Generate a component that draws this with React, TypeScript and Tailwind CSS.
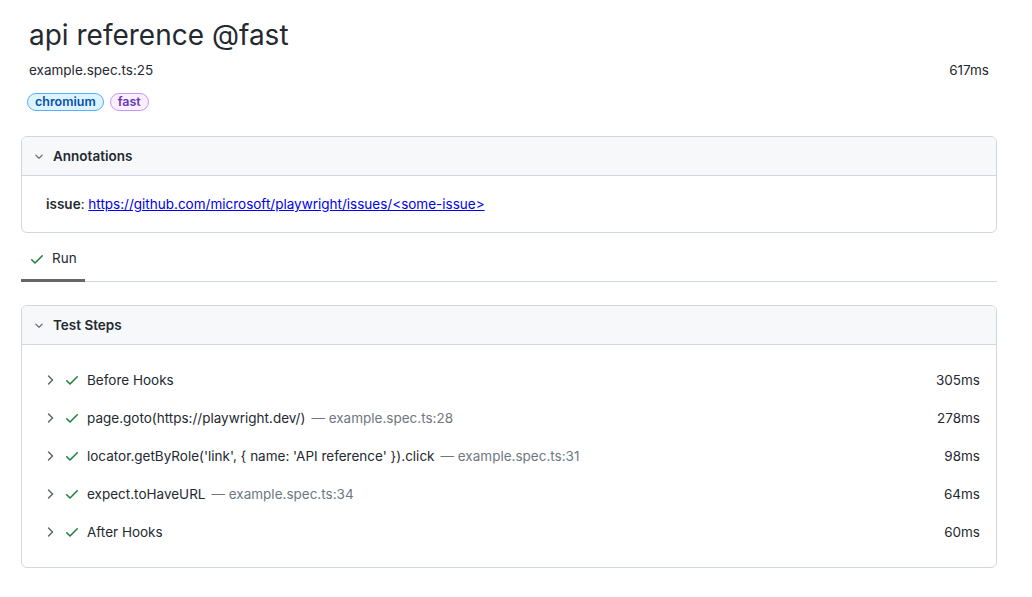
import React from 'react';

const font = { fontFamily: 'Inter, "Liberation Sans", sans-serif' };

const ChevronDown: React.FC = () => (
  <svg width="16" height="16" viewBox="0 0 16 16" className="text-[#57606a]" fill="currentColor">
    <path d="M12.78 6.22a.75.75 0 0 1 0 1.06l-4.25 4.25a.75.75 0 0 1-1.06 0L3.22 7.28a.75.75 0 0 1 1.06-1.06L8 9.94l3.72-3.72a.75.75 0 0 1 1.06 0Z" transform="translate(8 8) scale(0.75) translate(-8 -8)" />
  </svg>
);

const ChevronRight: React.FC = () => (
  <svg width="16" height="16" viewBox="0 0 16 16" className="text-[#57606a]" fill="none" stroke="currentColor" strokeWidth="1.4" strokeLinecap="round" strokeLinejoin="round">
    <path d="M6.5 4 10.5 8 6.5 12" />
  </svg>
);

const Check: React.FC = () => (
  <svg width="16" height="16" viewBox="0 0 16 16" className="text-[#1a7f37]" fill="currentColor">
    <path d="M13.78 4.22a.75.75 0 0 1 0 1.06l-7.25 7.25a.75.75 0 0 1-1.06 0L2.22 9.28a.75.75 0 0 1 1.06-1.06L6 10.94l6.72-6.72a.75.75 0 0 1 1.06 0Z" />
  </svg>
);

const steps = [
  { title: 'Before Hooks', loc: '', ms: '305ms' },
  { title: 'page.goto(https://playwright.dev/)', loc: 'example.spec.ts:28', ms: '278ms' },
  { title: "locator.getByRole('link', { name: 'API reference' }).click", loc: 'example.spec.ts:31', ms: '98ms' },
  { title: 'expect.toHaveURL', loc: 'example.spec.ts:34', ms: '64ms' },
  { title: 'After Hooks', loc: '', ms: '60ms' },
];

const App: React.FC = () => {
  return (
    <div className="min-h-[597px] bg-white text-[#24292f]" style={font}>
      <div className="w-[976px] ml-[21px] pt-[15px]">
        <div className="px-2">
          <h1 className="text-[28px] leading-[40px] font-normal">api reference @fast</h1>
          <div className="flex justify-between items-center mt-[5px] text-[13.5px] leading-5">
            <span>example.spec.ts:25</span>
            <span>617ms</span>
          </div>
          <div className="flex gap-[6px] mt-[13px] -ml-[2px]">
            <span className="h-[18px] px-[7px] flex items-center rounded-full border border-[#54aeff] bg-[#ddf4ff] text-[#0550ae] text-[12.5px] font-semibold">chromium</span>
            <span className="h-[18px] px-[7px] flex items-center rounded-full border border-[#c297ff] bg-[#fbefff] text-[#6639ba] text-[12.5px] font-semibold">fast</span>
          </div>
        </div>

        <div className="mt-[25px] border border-[#d0d7de] rounded-md overflow-hidden">
          <div className="h-[39px] bg-[#f6f8fa] border-b border-[#d0d7de] flex items-center pl-[9px] gap-[6px]">
            <ChevronDown />
            <span className="text-[13.5px] font-semibold">Annotations</span>
          </div>
          <div className="h-[56px] flex items-center pl-[24px] text-[13.5px]">
            <span className="font-semibold">issue</span>
            <span>:&nbsp;</span>
            <a href="#" className="text-[#0000ee] underline">https://github.com/microsoft/playwright/issues/&lt;some-issue&gt;</a>
          </div>
        </div>

        <div className="mt-[5px] border-b border-[#d0d7de] flex">
          <div className="h-[44px] w-[64px] flex items-center pl-[8px] gap-[7px] border-b-[3px] border-[#666] -mb-px">
            <Check />
            <span className="text-[13.5px]">Run</span>
          </div>
        </div>

        <div className="mt-[23px] border border-[#d0d7de] rounded-md overflow-hidden">
          <div className="h-[39px] bg-[#f6f8fa] border-b border-[#d0d7de] flex items-center pl-[9px] gap-[6px]">
            <ChevronDown />
            <span className="text-[13.5px] font-semibold">Test Steps</span>
          </div>
          <div className="py-[16px]">
            {steps.map((s) => (
              <div key={s.title} className="h-[38px] flex items-center pl-[20px] pr-[16px] text-[13.5px]">
                <ChevronRight />
                <span className="ml-[6px]"><Check /></span>
                <span className="ml-[7px]">{s.title}</span>
                {s.loc && <span className="text-[#6e7781] ml-[6px]">— {s.loc}</span>}
                <span className="ml-auto">{s.ms}</span>
              </div>
            ))}
          </div>
        </div>
      </div>
    </div>
  );
};

export default App;
